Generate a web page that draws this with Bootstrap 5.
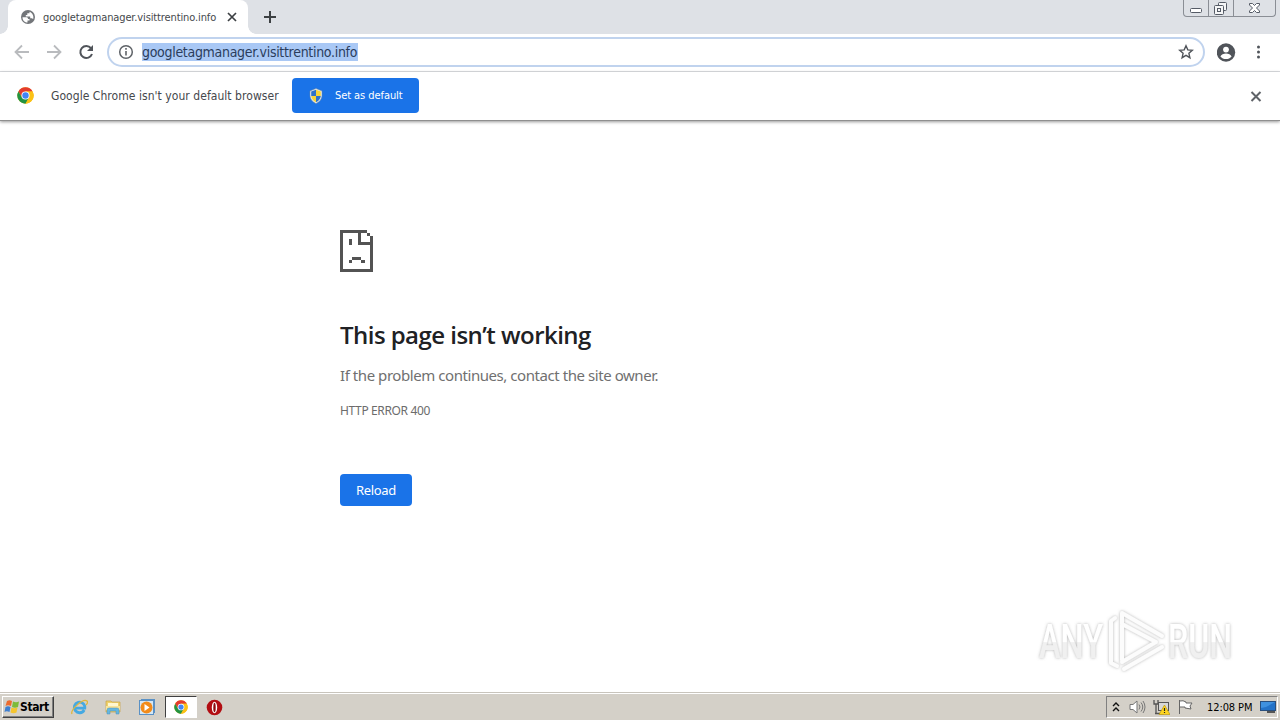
<!DOCTYPE html>
<html lang="en">
<head>
<meta charset="utf-8">
<title>googletagmanager.visittrentino.info</title>
<link href="https://cdn.jsdelivr.net/npm/bootstrap@5.3.0/dist/css/bootstrap.min.css" rel="stylesheet">
<style>
body{width:1280px;height:720px;overflow:hidden;background:#fff;font-family:"Noto Sans",sans-serif;color:#333}
svg{display:block;flex:none}
.t{white-space:nowrap;line-height:1;flex:none}
.tabstrip{height:34px;background:#dee1e6;position:relative}
.tab-active{width:240px;height:34px;margin-left:8px;background:#fff;border-radius:8px 8px 0 0;padding-left:13px;position:relative}
.tab-active::before,.tab-active::after{content:"";position:absolute;bottom:0;width:8px;height:8px}
.tab-active::before{left:-8px;background:radial-gradient(circle at 0 0,transparent 7.5px,#fff 8px)}
.tab-active::after{right:-8px;background:radial-gradient(circle at 100% 0,transparent 7.5px,#fff 8px)}
.tab-title{font:11px "DejaVu Sans Condensed","DejaVu Sans",sans-serif;font-stretch:condensed;letter-spacing:-.12px;width:183px;margin-left:8px;color:#45484c}
.winbtns{position:absolute;right:4px;top:0;width:93px;height:17px;border:1px solid #8a8e95;border-top:0;border-radius:0 0 4px 4px}
.winbtns>span{border-right:1px solid #8a8e95;height:16px}
.winbtns>span:last-child{border:0}
.toolbar{height:38px;border-bottom:1px solid #dadce0;padding-bottom:1px}
.omni{width:1098px;height:30px;margin-left:12px;border:2px solid #c0d3ee;border-radius:15px;padding:0 9px 0 9px}
.url{font:14px "DejaVu Sans Condensed","DejaVu Sans",sans-serif;font-stretch:condensed;letter-spacing:-.3px;background:#a9c8f5;color:#2b3d5c;height:18px;line-height:18px;margin-left:8px;width:216px}
.infobar{height:49px;border-bottom:1px solid #8f8f8f;box-shadow:0 1px 3px #999;padding-bottom:1px}
.infotext{font:12px "DejaVu Sans Condensed","DejaVu Sans",sans-serif;font-stretch:condensed;letter-spacing:.05px;margin-left:17px;width:241px;color:#45484c}
.setdef{width:127px;height:35px;background:#1a73e8;border-radius:4px;border:0;padding:0 0 0 16px;color:#fff;font:11px "DejaVu Sans Condensed","DejaVu Sans",sans-serif;font-stretch:condensed;letter-spacing:-.07px}
.errpage{height:571px;padding:109px 0 0 340px;position:relative}
.errpage h1{font:600 24px/30px "Open Sans",sans-serif;color:#202124;margin:48px 0 0;letter-spacing:-.54px}
.msg{font:15px/20px "Noto Sans",sans-serif;color:#707070;margin-top:15px;letter-spacing:-.44px}
.code{font:12px/16px "Noto Sans",sans-serif;color:#6c6c6c;margin-top:18px;letter-spacing:-.36px}
.reload{width:72px;height:32px;border:0;border-radius:4px;background:#1a73e8;color:#fff;font:13px "Noto Sans",sans-serif;margin-top:55px;letter-spacing:-.3px}
.watermark{position:absolute;left:1032px;top:483px;overflow:visible}
.taskbar{height:28px;background:#d4d0c8;border-top:1px solid #c8c4bc;box-shadow:inset 0 1px #fff;padding:3px 2px 0 2px}
.start{width:52px;height:22px;border:1px solid;border-color:#fff #404040 #404040 #fff;box-shadow:inset -1px -1px #808080;padding-left:1px;font:bold 12px "DejaVu Sans Condensed","DejaVu Sans",sans-serif;font-stretch:condensed;letter-spacing:-.4px;color:#000}
.pressed{width:32px;height:22px;border:1px solid;border-color:#404040 #fff #fff #404040;background:#fff;margin-left:9px}
.tray{width:172px;height:22px;border:1px solid;border-color:#808080 #fff #fff #808080;padding-left:5px}
.clock{font:11px "DejaVu Sans Condensed","DejaVu Sans",sans-serif;font-stretch:condensed;color:#000;letter-spacing:-.1px;margin-left:13px;width:53px}
</style>
</head>
<body>
<svg width="0" height="0" class="position-absolute"><defs>
<symbol id="chrome" viewBox="0 0 48 48"><circle cx="24" cy="24" r="23" fill="#fbc116"/><path d="M4 12.5A23 23 0 0 1 44 12.5H24L14 29.5Z" fill="#e33b2e"/><path d="M4 12.5A23 23 0 0 0 24 47L34 29.7 24 34 14 29.7Z" fill="#229342"/><path d="M44 12.5H24L34 30 24 47A23 23 0 0 0 44 12.5Z" fill="#fbc116"/><circle cx="24" cy="24" r="11.5" fill="#fff"/><circle cx="24" cy="24" r="9" fill="#4285f4"/></symbol>
</defs></svg>
<header class="tabstrip d-flex">
  <div class="tab-active d-flex align-items-center">
    <svg width="14" height="14" viewBox="0 0 14 14"><circle cx="7" cy="7" r="7" fill="#73767a"/><path d="M1.500 7.200h3.800c1.300 0 1.700.6 1.700 1.900h1.500v1.500H6.500v1.900C4 12.500 1.500 10.500 1.500 7.200ZM8.500 1.700v1.600H6.300v1.600H4.800v1.500h4.400v1.800h1.600l1.400.8c.8-3-.7-6.200-3.700-7.300Z" fill="#fff"/></svg>
    <span class="t tab-title">googletagmanager.visittrentino.info</span>
    <svg width="12" height="12" viewBox="0 0 12 12"><path d="M2 2l8 8M10 2l-8 8" stroke="#3c4043" stroke-width="1.700"/></svg>
  </div>
  <svg class="align-self-center ms-3" width="12" height="12" viewBox="0 0 12 12"><path d="M6 0v12M0 6h12" stroke="#3c4043" stroke-width="2"/></svg>
  <div class="winbtns d-flex">
    <span style="width:25px"><svg width="24" height="16"><rect x="6.500" y="8.500" width="11" height="4" rx="1" fill="#fff" stroke="#555b66"/></svg></span>
    <span style="width:25px"><svg width="24" height="16" fill="#f5f6f7" stroke="#555b66"><rect x="9.500" y="2.500" width="8" height="8" rx="1"/><rect x="5.500" y="5.500" width="9" height="9" rx="1"/><rect x="8.500" y="8.500" width="3" height="3"/></svg></span>
    <span class="flex-fill"><svg width="40" height="16"><path d="M15.500 3.500h3l2 2 2-2h3v1.500l-3 3 3 3v1.500h-3l-2-2-2 2h-3V11l3-3-3-3Z" fill="#fff" stroke="#555b66"/></svg></span>
  </div>
</header>
<nav class="toolbar d-flex align-items-center">
  <svg style="margin-left:14px" width="16" height="16" fill="none" stroke="#b9bbbe" stroke-width="1.800"><path d="M15 8H2M8 1.500 1.500 8 8 14.500"/></svg>
  <svg class="ms-3" width="16" height="16" fill="none" stroke="#b9bbbe" stroke-width="1.800"><path d="M1 8h13M8 1.500 14.500 8 8 14.500"/></svg>
  <svg class="ms-3" width="17" height="16" viewBox="0 0 17 16"><path d="M13 4.200A6 6 0 1 0 14 10" fill="none" stroke="#50545a" stroke-width="2"/><path d="M15 1v6H9Z" fill="#50545a"/></svg>
  <div class="omni d-flex align-items-center">
    <svg width="16" height="16"><circle cx="8" cy="8" r="6.300" fill="none" stroke="#5f6368" stroke-width="1.500"/><path d="M8 7v4.500M8 4v1.700" stroke="#5f6368" stroke-width="1.600"/></svg>
    <span class="t url">googletagmanager.visittrentino.info</span>
    <svg class="ms-auto" width="16" height="16"><path d="M8 1.800l1.800 4.100 4.500.4-3.400 3 1 4.400L8 11.400l-3.900 2.300 1-4.400-3.400-3 4.500-.4Z" fill="none" stroke="#50545a" stroke-width="1.400"/></svg>
  </div>
  <svg style="margin-left:12px" width="19" height="19" viewBox="0 0 19 19"><circle cx="9" cy="9.500" r="9.200" fill="#50545a"/><circle cx="9" cy="6.600" r="2.900" fill="#fff"/><path d="M3.400 13.500c1.500-4 9.700-4 11.200 0-2.500 3.400-8.700 3.400-11.200 0Z" fill="#fff"/></svg>
  <svg style="margin-left:20px" width="6" height="16" fill="#50545a"><circle cx="2.500" cy="3" r="1.500"/><circle cx="2.500" cy="8" r="1.500"/><circle cx="2.500" cy="13" r="1.500"/></svg>
</nav>
<section class="infobar d-flex align-items-center">
  <svg style="margin-left:17px" width="17" height="17"><use href="#chrome"/></svg>
  <span class="t infotext">Google Chrome isn't your default browser</span>
  <button class="setdef d-flex align-items-center">
    <svg width="16" height="16"><path d="M8 .5 14 3v4c0 4-2.500 7-6 8.500C4.500 14 2 11 2 7V3Z" fill="#e8edf2" stroke="#778b99" stroke-width=".5"/><path d="M8 1.800V8H3.200V3.500Z" fill="#2e72ca"/><path d="M8 1.800V8h4.800V3.500Z" fill="#f6d43a"/><path d="M8 8H3.200c.3 3 2.300 5 4.800 6.200Z" fill="#f6d43a"/><path d="M8 8h4.800c-.3 3-2.300 5-4.800 6.200Z" fill="#2e72ca"/></svg>
    <span class="t" style="margin-left:11px">Set as default</span>
  </button>
  <svg style="margin-left:831px" width="12" height="12"><path d="M1.500 2l9 9M10.500 2l-9 9" stroke="#5f6368" stroke-width="2"/></svg>
</section>
<main class="errpage">
  <svg width="33" height="42" shape-rendering="crispEdges" fill="#535353"><path d="M0 0h27v3h3v3h3v36H0ZM3 3v36h27V15H18V3ZM21 3v9h9V6h-3V3ZM9 9h3v6H9ZM12 27h9v3h-9ZM9 30h3v3H9ZM21 30h4v3h-4Z" fill-rule="evenodd"/></svg>
  <h1><span class="t">This page isn’t working</span></h1>
  <div class="msg"><span class="t">If the problem continues, contact the site owner.</span></div>
  <div class="code"><span class="t">HTTP ERROR 400</span></div>
  <button class="reload d-block">Reload</button>
  <svg class="watermark" width="206" height="74" viewBox="0 0 206 74">
    <defs><linearGradient id="w" x1="0" y1="0" x2="0" y2="1"><stop offset=".5" stop-color="#fff"/><stop offset=".52" stop-color="#f0f0f0"/></linearGradient><filter id="s" x="-10%" y="-10%" width="120%" height="130%"><feDropShadow dx="0" dy="0" stdDeviation="1.500" flood-color="#888" flood-opacity=".65"/></filter></defs>
    <g filter="url(#s)" fill="url(#w)"><text x="7" y="54" font-family="Roboto" font-size="48" font-weight="500" textLength="64" lengthAdjust="spacingAndGlyphs">ANY</text><text x="136" y="54" font-family="Roboto" font-size="48" font-weight="500" textLength="64" lengthAdjust="spacingAndGlyphs">RUN</text></g>
    <g filter="url(#s)" fill="none" stroke="#fcfcfc" stroke-width="4" stroke-linejoin="round" stroke-linecap="round"><path d="M90 56V9l40 23M90 20l34 18-34 20M83 14l-4 3v42l6 3M92 65l38-22"/></g>
  </svg>
</main>
<footer class="taskbar d-flex align-items-start">
  <div class="start d-flex align-items-center">
    <svg width="16" height="16"><path d="M3 2c2-1 3-1 5 0L7 7C5 6 3 6 1.500 7Z" fill="#ed6b2e"/><path d="M9 2.500c2 1 4 1 6 0L14 8c-2 1-4 1-6 0Z" fill="#7dbb3a"/><path d="M1.500 8c2-1 3-1 5 0l-1 5c-2-1-3.500-1-5 0Z" fill="#3e7fd0"/><path d="M7.500 8.500c2 1 4 1 6 0l-1 5c-2 1-4 1-6 0Z" fill="#f5c52e"/></svg>
    <span class="t">Start</span>
  </div>
  <svg style="margin-left:17px;margin-top:3px" width="17" height="17"><path d="M13.200 11A5.300 5.300 0 1 1 13.800 9.200H4" fill="none" stroke="#45a9e2" stroke-width="2.800"/><path d="M1 15C-1 11 12-1 16 2c1 1 0 3-1 4" fill="none" stroke="#dfb63c" stroke-width="1.300"/></svg>
  <svg style="margin-left:17px;margin-top:3px" width="17" height="17"><path d="M1 4V2h5l1 1h8v10H1Z" fill="#efd16b" stroke="#c8a347" stroke-width=".7"/><path d="M3 4h10v4H3Z" fill="#fff7cf"/><path d="M1 7h14v4H1Z" fill="#f7e49a"/><path d="M2 15v-4q0-2 2-2h8q2 0 2 2v4h-3v-3H5v3Z" fill="#65b7df" stroke="#4c92bb" stroke-width=".5"/></svg>
  <svg style="margin-left:17px;margin-top:3px" width="17" height="17"><rect x="2.500" y=".5" width="13" height="13" fill="#a9cae6" stroke="#5a91c5"/><rect x=".5" y="1.500" width="14" height="14" fill="#d6e8f5" stroke="#5a91c5"/><circle cx="7.500" cy="8.500" r="6" fill="#f28b19"/><path d="M5.500 5l5 3.500-5 3.500Z" fill="#fff"/></svg>
  <div class="pressed d-flex align-items-center justify-content-center"><svg width="14" height="14"><use href="#chrome"/></svg></div>
  <svg style="margin-left:9px;margin-top:3px" width="17" height="17"><circle cx="8.500" cy="8.500" r="7.800" fill="#b20d12"/><ellipse cx="8.500" cy="8.500" rx="2.700" ry="5.700" fill="#fff"/><ellipse cx="8.500" cy="8.500" rx="1.200" ry="4.700" fill="#8e0a0e"/></svg>
  <div class="tray d-flex align-items-center ms-auto">
    <svg width="8" height="12" fill="none" stroke="#111" stroke-width="1.400"><path d="M1 5l3-3 3 3M1 10l3-3 3 3"/></svg>
    <svg style="margin-left:9px" width="17" height="16" fill="none" stroke="#777"><path d="M1 5.500h3L8 2v12L4 10.500H1Z" fill="#fff"/><path d="M10 5.500q2 2.500 0 5M12 3.500q3.500 4.500 0 9M14 2q4 6 0 12"/></svg>
    <svg style="margin-left:7px" width="17" height="16"><rect x="5.500" y="3.500" width="10" height="8" fill="#d7d7d7" stroke="#555"/><path d="M1 1v4h4V1M3 5v10M2 14.500h9" fill="none" stroke="#555" stroke-width="1.300"/><path d="M11.500 6 17 15.500H6Z" fill="#ffd51f" stroke="#b59100" stroke-width=".6"/><path d="M11.500 9v3M11.500 13v1" stroke="#222" stroke-width="1.200"/></svg>
    <svg style="margin-left:7px" width="17" height="16"><path d="M2.500 1v14M3 2q3-1 6 1v1h6l-2 3 1 3-6-1V8L3 8" fill="#fff" stroke="#666"/></svg>
    <span class="t clock">12:08 PM</span>
    <svg width="16" height="16"><rect x=".5" y="2.500" width="15" height="9" fill="#2473c8" stroke="#294f7e"/><path d="M1 3h14L6 8 1 9Z" fill="#3f91df"/><path d="M7 13h8" stroke="#555" stroke-width="2"/></svg>
  </div>
</footer>
<script src="https://cdn.jsdelivr.net/npm/bootstrap@5.3.0/dist/js/bootstrap.bundle.min.js"></script>
</body>
</html>
